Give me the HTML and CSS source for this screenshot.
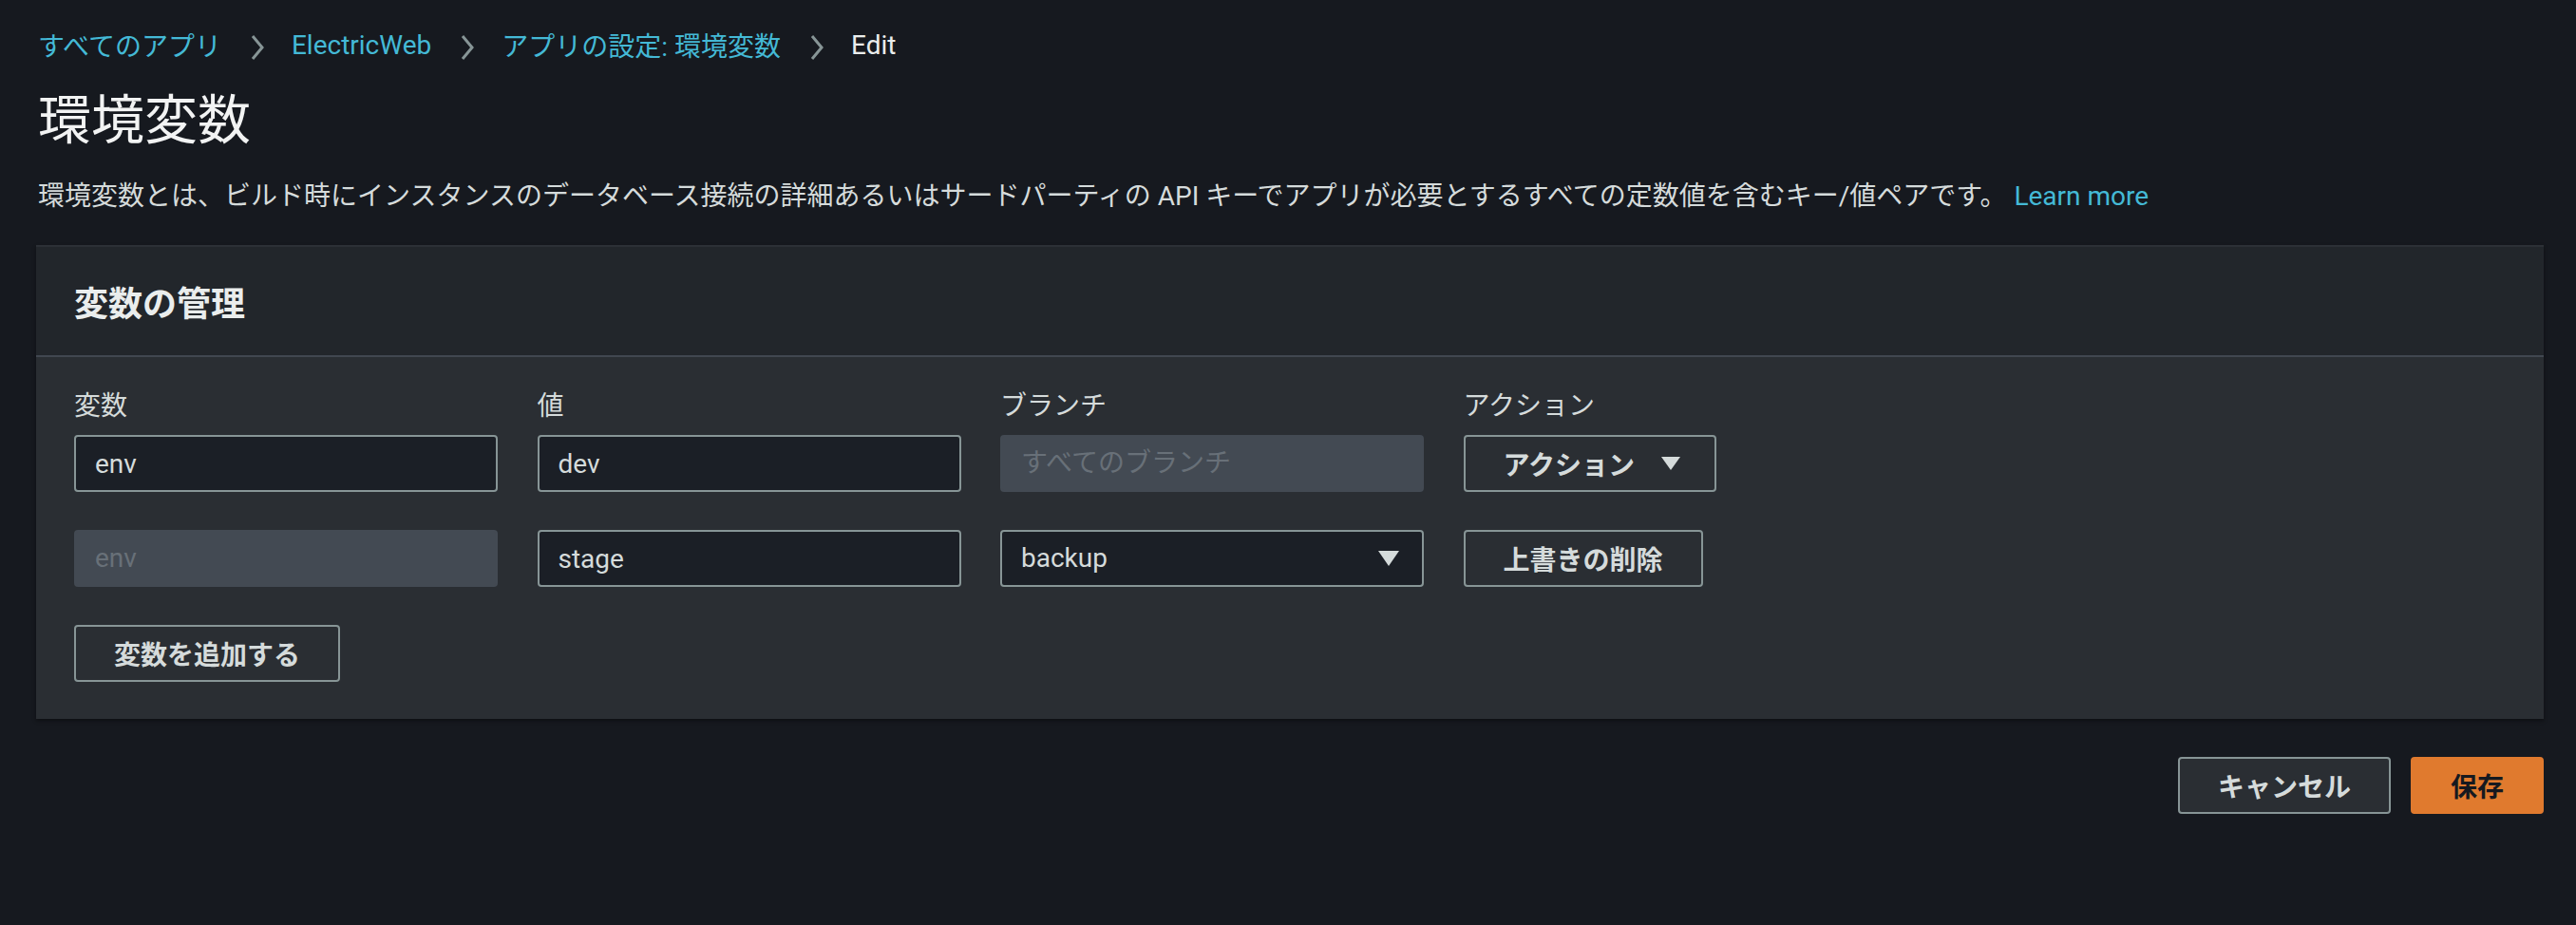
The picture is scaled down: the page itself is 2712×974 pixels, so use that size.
FILE: index.html
```html
<!DOCTYPE html>
<html lang="ja">

<head>
    <meta charset="UTF-8">
    <meta name="viewport" content="width=device-width, initial-scale=1.0">
    <title>環境変数</title>
    <link rel="stylesheet" href="styles.css">
</head>

<body>
    <nav class="crumbs">
        <a href="#">すべてのアプリ</a>
        <svg class="sep" width="18" height="28" viewBox="0 0 18 28"><polyline points="4,2 14,14 4,26" fill="none" stroke="#879596" stroke-width="3"/></svg>
        <a href="#">ElectricWeb</a>
        <svg class="sep" width="18" height="28" viewBox="0 0 18 28"><polyline points="4,2 14,14 4,26" fill="none" stroke="#879596" stroke-width="3"/></svg>
        <a href="#">アプリの設定: 環境変数</a>
        <svg class="sep" width="18" height="28" viewBox="0 0 18 28"><polyline points="4,2 14,14 4,26" fill="none" stroke="#879596" stroke-width="3"/></svg>
        <span class="current">Edit</span>
    </nav>

    <h1 class="title">環境変数</h1>
    <p class="desc">環境変数とは、ビルド時にインスタンスのデータベース接続の詳細あるいはサードパーティの API キーでアプリが必要とするすべての定数値を含むキー/値ペアです。<a href="#">Learn more</a></p>

    <div class="panel">
        <div class="panel-head">変数の管理</div>
        <div class="panel-body">
            <div class="row labels">
                <span>変数</span>
                <span>値</span>
                <span>ブランチ</span>
                <span>アクション</span>
            </div>
            <div class="row">
                <input class="field" type="text" value="env">
                <input class="field" type="text" value="dev">
                <div class="field off">すべてのブランチ</div>
                <button class="btn">アクション<svg class="caret" width="20" height="14" viewBox="0 0 20 14"><polygon points="0,0 20,0 10,14" fill="#d5dbdb"/></svg></button>
            </div>
            <div class="row">
                <div class="field off">env</div>
                <input class="field" type="text" value="stage">
                <div class="field select">backup<svg width="22" height="16" viewBox="0 0 22 16"><polygon points="0,0 22,0 11,16" fill="#d5dbdb"/></svg></div>
                <button class="btn">上書きの削除</button>
            </div>
            <button class="btn">変数を追加する</button>
        </div>
    </div>

    <div class="foot">
        <button class="btn">キャンセル</button>
        <button class="btn primary">保存</button>
    </div>
</body>

</html>
```

FILE: styles.css
```css
body {
    margin: 0;
    padding: 27px 34px 40px 38px;
    background: #16191f;
    color: #d5dbdb;
    font-family: Roboto, "Noto Sans CJK JP", sans-serif;
    font-size: 28px;
}

a {
    color: #44b9d6;
    text-decoration: none;
}

.crumbs {
    display: flex;
    align-items: center;
    height: 40px;
    padding-left: 2px;
}

.crumbs .sep {
    margin: 6px 27px 0 29px;
}

.crumbs .current {
    color: #eaeded;
}

.title {
    margin: 24px 0 0 2px;
    font-size: 56px;
    font-weight: 400;
    line-height: 72px;
    color: #f2f3f3;
}

.desc {
    margin: 24px 0 0 2px;
    line-height: 40px;
}

.desc a {
    margin-left: 8px;
}

.panel {
    margin-top: 31px;
    background: #2a2e33;
    border-top: 2px solid #2c3036;
    box-shadow: 0 2px 4px rgba(0, 0, 0, 0.4);
}

.panel-head {
    display: flex;
    align-items: center;
    height: 114px;
    padding: 0 40px;
    background: #22262b;
    border-bottom: 2px solid #414750;
    font-size: 36px;
    font-weight: 700;
    color: #eaeded;
}

.panel-body {
    padding: 32px 40px 39px;
}

.row {
    display: grid;
    grid-template-columns: repeat(3, 446px) auto;
    column-gap: 41.5px;
    justify-items: start;
    margin-bottom: 40px;
}

.row.labels {
    margin-bottom: 10px;
    line-height: 40px;
}

.field {
    box-sizing: border-box;
    width: 446px;
    height: 60px;
    padding: 0 20px;
    border: 2px solid #879596;
    border-radius: 4px;
    background: #1b1f26;
    color: #d5dbdb;
    font-family: inherit;
    font-size: 28px;
    line-height: 56px;
    outline: none;
}

.field.off {
    background: #434a53;
    border-color: #434a53;
    color: #687078;
}

.field.select {
    display: flex;
    justify-content: space-between;
    align-items: center;
    padding-right: 24px;
}

.btn {
    display: inline-flex;
    align-items: center;
    box-sizing: border-box;
    height: 60px;
    padding: 0 40px;
    border: 2px solid #879596;
    border-radius: 4px;
    background: transparent;
    color: #d5dbdb;
    font-family: inherit;
    font-size: 28px;
    font-weight: 700;
}

.btn .caret {
    margin: 0 -4px 0 28px;
}

.foot {
    display: flex;
    justify-content: flex-end;
    gap: 21px;
    margin-top: 40px;
}

.foot .btn {
    background: #2a2e33;
}

.foot .btn.primary {
    border-color: #e07a2e;
    background: #e07a2e;
    color: #16191f;
}
```
